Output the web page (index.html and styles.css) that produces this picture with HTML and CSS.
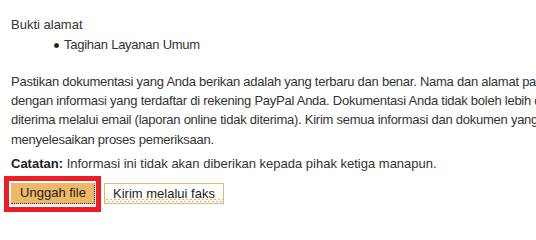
FILE: index.html
```html
<!DOCTYPE html>
<html lang="id">
<head>
<meta charset="utf-8">
<title>Bukti alamat</title>
<link rel="stylesheet" href="styles.css">
</head>
<body>
<div class="page">
  <p class="label">Bukti alamat</p>
  <ul class="docs">
    <li>Tagihan Layanan Umum</li>
  </ul>
  <p class="info">Pastikan dokumentasi yang Anda berikan adalah yang terbaru dan benar. Nama dan alamat pada dokumentasi harus sesuai<br>dengan informasi yang terdaftar di rekening PayPal Anda. Dokumentasi Anda tidak boleh lebih dari 10 MB. Dokumen tidak dapat<br>diterima melalui email (laporan online tidak diterima). Kirim semua informasi dan dokumen yang diminta untuk<br>menyelesaikan proses pemeriksaan.</p>
  <p class="note"><strong>Catatan:</strong> Informasi ini tidak akan diberikan kepada pihak ketiga manapun.</p>
  <div class="actions">
    <span class="highlight"><button class="btn btn-primary" type="button">Unggah file</button></span>
    <button class="btn btn-secondary" type="button">Kirim melalui faks</button>
  </div>
</div>
</body>
</html>
```

FILE: styles.css
```css
html, body {
  margin: 0;
  padding: 0;
  background: #ffffff;
}

body {
  font-family: "Liberation Sans", Arial, sans-serif;
  font-size: 13px;
  line-height: 18px;
  color: #333333;
}

.page {
  padding: 16px 0 0 11px;
  overflow: hidden;
  white-space: nowrap;
}

.label {
  margin: 0;
}

.docs {
  list-style: none;
  margin: 2px 0 18px;
  padding: 0 0 0 53px;
  letter-spacing: -0.25px;
}

.docs li {
  display: flex;
  align-items: center;
  gap: 5px;
}

.docs li::before {
  content: "";
  width: 5px;
  height: 5px;
  margin-left: -10px;
  border-radius: 50%;
  background: radial-gradient(circle, #1e1e1e 45%, #b8892f 100%);
}

.info {
  margin: 0 0 6px;
  line-height: 19.2px;
  letter-spacing: -0.25px;
}

.note {
  margin: 0 0 3px;
}

.note strong {
  color: #222222;
}

.actions {
  display: flex;
  align-items: center;
  gap: 3px;
  margin-left: -7px;
}

.highlight {
  display: flex;
  border: 5px solid #ee1c25;
  padding: 2px 1px 3px 2px;
  background: #ffffff;
}

.btn {
  font-family: "Liberation Sans", Arial, sans-serif;
  font-size: 13px;
  line-height: 18px;
  color: #222222;
  margin: 0;
  cursor: pointer;
}

.btn-primary {
  width: 84px;
  height: 21px;
  padding: 0;
  background: #eeb866;
  border: 1px solid #eeb866;
  border-right: 1px dotted #3a2a10;
  border-bottom: 1px dotted #3a2a10;
}

.btn-secondary {
  width: 120px;
  height: 21px;
  padding: 0;
  border: 1px solid #e5b56d;
  background:
    radial-gradient(circle, #e8b768 0.7px, transparent 1px) 0 14px / 4px 3px repeat-x,
    radial-gradient(circle, #e8b768 0.7px, transparent 1px) 2px 16px / 4px 3px repeat-x,
    #ffffff;
}
```
